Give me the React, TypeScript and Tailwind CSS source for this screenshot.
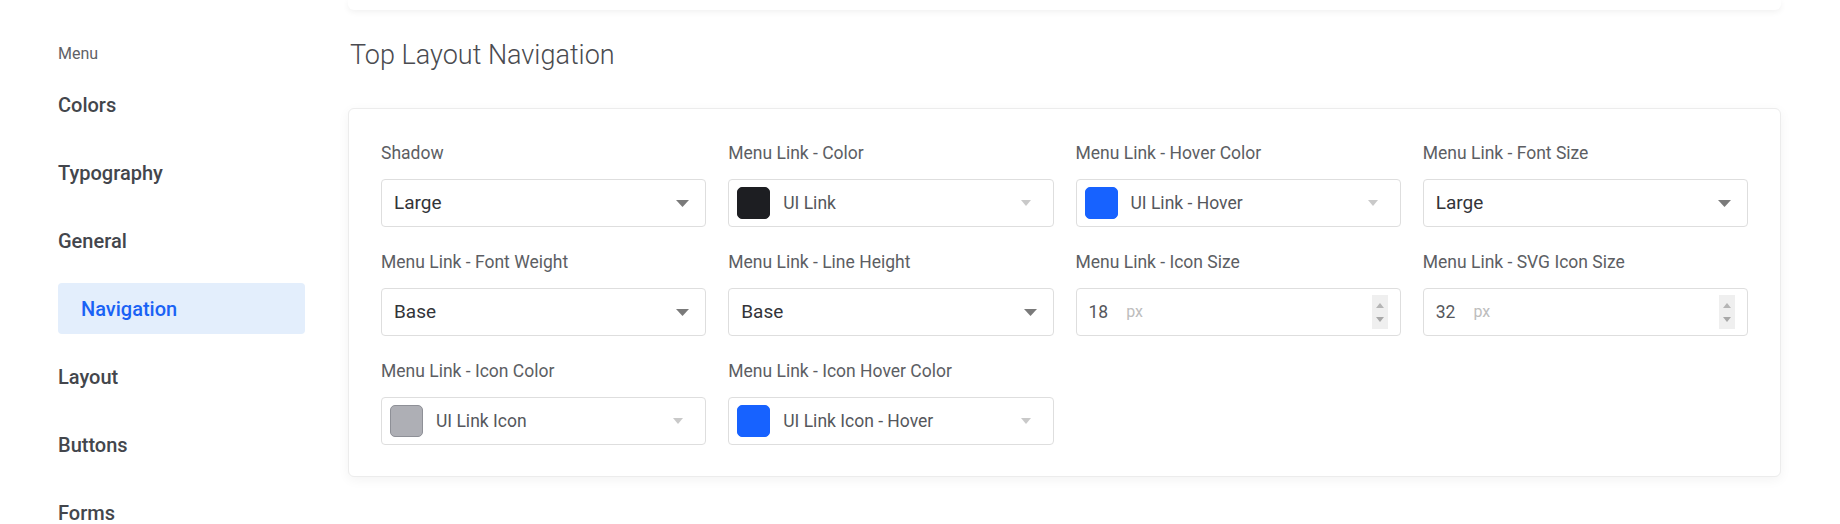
import React from "react";

type Field =
  | { kind: "select"; label: string; value: string }
  | { kind: "color"; label: string; value: string; swatch: string }
  | { kind: "number"; label: string; value: string; unit: string };

const fields: Field[] = [
  { kind: "select", label: "Shadow", value: "Large" },
  { kind: "color", label: "Menu Link - Color", value: "UI Link", swatch: "bg-[#1d1e22] border-[#1d1e22]" },
  { kind: "color", label: "Menu Link - Hover Color", value: "UI Link - Hover", swatch: "bg-[#1762ff] border-[#1762ff]" },
  { kind: "select", label: "Menu Link - Font Size", value: "Large" },
  { kind: "select", label: "Menu Link - Font Weight", value: "Base" },
  { kind: "select", label: "Menu Link - Line Height", value: "Base" },
  { kind: "number", label: "Menu Link - Icon Size", value: "18", unit: "px" },
  { kind: "number", label: "Menu Link - SVG Icon Size", value: "32", unit: "px" },
  { kind: "color", label: "Menu Link - Icon Color", value: "UI Link Icon", swatch: "bg-[#aeafb5] border-[#8e9097]" },
  { kind: "color", label: "Menu Link - Icon Hover Color", value: "UI Link Icon - Hover", swatch: "bg-[#1762ff] border-[#1762ff]" },
];

const menu = ["Colors", "Typography", "General", "Navigation", "Layout", "Buttons", "Forms"];

function Caret({ light }: { light?: boolean }) {
  return light ? (
    <svg width="10" height="6" viewBox="0 0 10 6" className="shrink-0">
      <path d="M0 0h10L5 6z" fill="#c9c9c9" />
    </svg>
  ) : (
    <svg width="13" height="7" viewBox="0 0 13 7" className="shrink-0">
      <path d="M0 0h13L6.5 7z" fill="#7a7a7a" />
    </svg>
  );
}

function Control({ field }: { field: Field }) {
  if (field.kind === "select") {
    return (
      <div className="h-12 flex items-center justify-between pl-3 pr-4 bg-white border border-[#dedede] rounded-[4px]">
        <span className="text-[19px] text-[#333438]">{field.value}</span>
        <Caret />
      </div>
    );
  }
  if (field.kind === "color") {
    return (
      <div className="h-12 flex items-center pl-2 pr-[22px] bg-white border border-[#dedede] rounded-[4px]">
        <span className={`w-[33px] h-[32px] rounded-[5px] border ${field.swatch}`} />
        <span className="ml-[13px] flex-1 text-[17.5px] text-[#55575c]">{field.value}</span>
        <Caret light />
      </div>
    );
  }
  return (
    <div className="h-12 flex items-center pl-3 pr-3 bg-white border border-[#dedede] rounded-[4px]">
      <span className="text-[17.5px] text-[#55575c]">{field.value}</span>
      <span className="ml-[18px] flex-1 text-[16px] text-[#bdbdbd]">{field.unit}</span>
      <div className="w-4 h-[34px] bg-[#efefef] flex flex-col items-center justify-center gap-[9px]">
        <svg width="8" height="5" viewBox="0 0 8 5">
          <path d="M4 0l4 5H0z" fill="#b5b5b5" />
        </svg>
        <svg width="8" height="5" viewBox="0 0 8 5">
          <path d="M0 0h8L4 5z" fill="#a8a8a8" />
        </svg>
      </div>
    </div>
  );
}

export default function App() {
  return (
    <div className="w-full h-[524px] overflow-hidden bg-white flex font-['Roboto','Liberation_Sans',sans-serif]">
      <aside className="w-[348px] shrink-0 pl-[58px] pr-[43px] pt-[44px]">
        <p className="text-[16px] leading-5 text-[#5f6166] mb-[15px]">Menu</p>
        <nav className="flex flex-col gap-[17px]">
          {menu.map((item) =>
            item === "Navigation" ? (
              <div
                key={item}
                className="h-[51px] flex items-center pl-[23px] rounded-[4px] bg-[#e3eefc] text-[20px] font-medium text-[#1a62f5]"
              >
                {item}
              </div>
            ) : (
              <div key={item} className="h-[51px] flex items-center text-[20px] font-medium text-[#43464c]">
                {item}
              </div>
            )
          )}
        </nav>
      </aside>

      <main className="flex-1">
        <div className="w-[1433px] h-[10px] bg-white rounded-b-md shadow-[0_2px_6px_rgba(0,0,0,0.06)]" />
        <h1 className="mt-[29px] text-[27px] leading-[32px] font-light text-[#4a4b50] pl-[2px]">
          Top Layout Navigation
        </h1>
        <section className="mt-[37px] w-[1433px] bg-white border border-[#ececec] rounded-[6px] shadow-[0_3px_12px_rgba(0,0,0,0.05)] px-8 pt-[34px] pb-[31px]">
          <div className="grid grid-cols-4 gap-x-[22px] gap-y-[25px]">
            {fields.map((f) => (
              <div key={f.label}>
                <label className="block text-[17.5px] leading-5 text-[#5c5e63] mb-4">{f.label}</label>
                <Control field={f} />
              </div>
            ))}
          </div>
        </section>
      </main>
    </div>
  );
}
